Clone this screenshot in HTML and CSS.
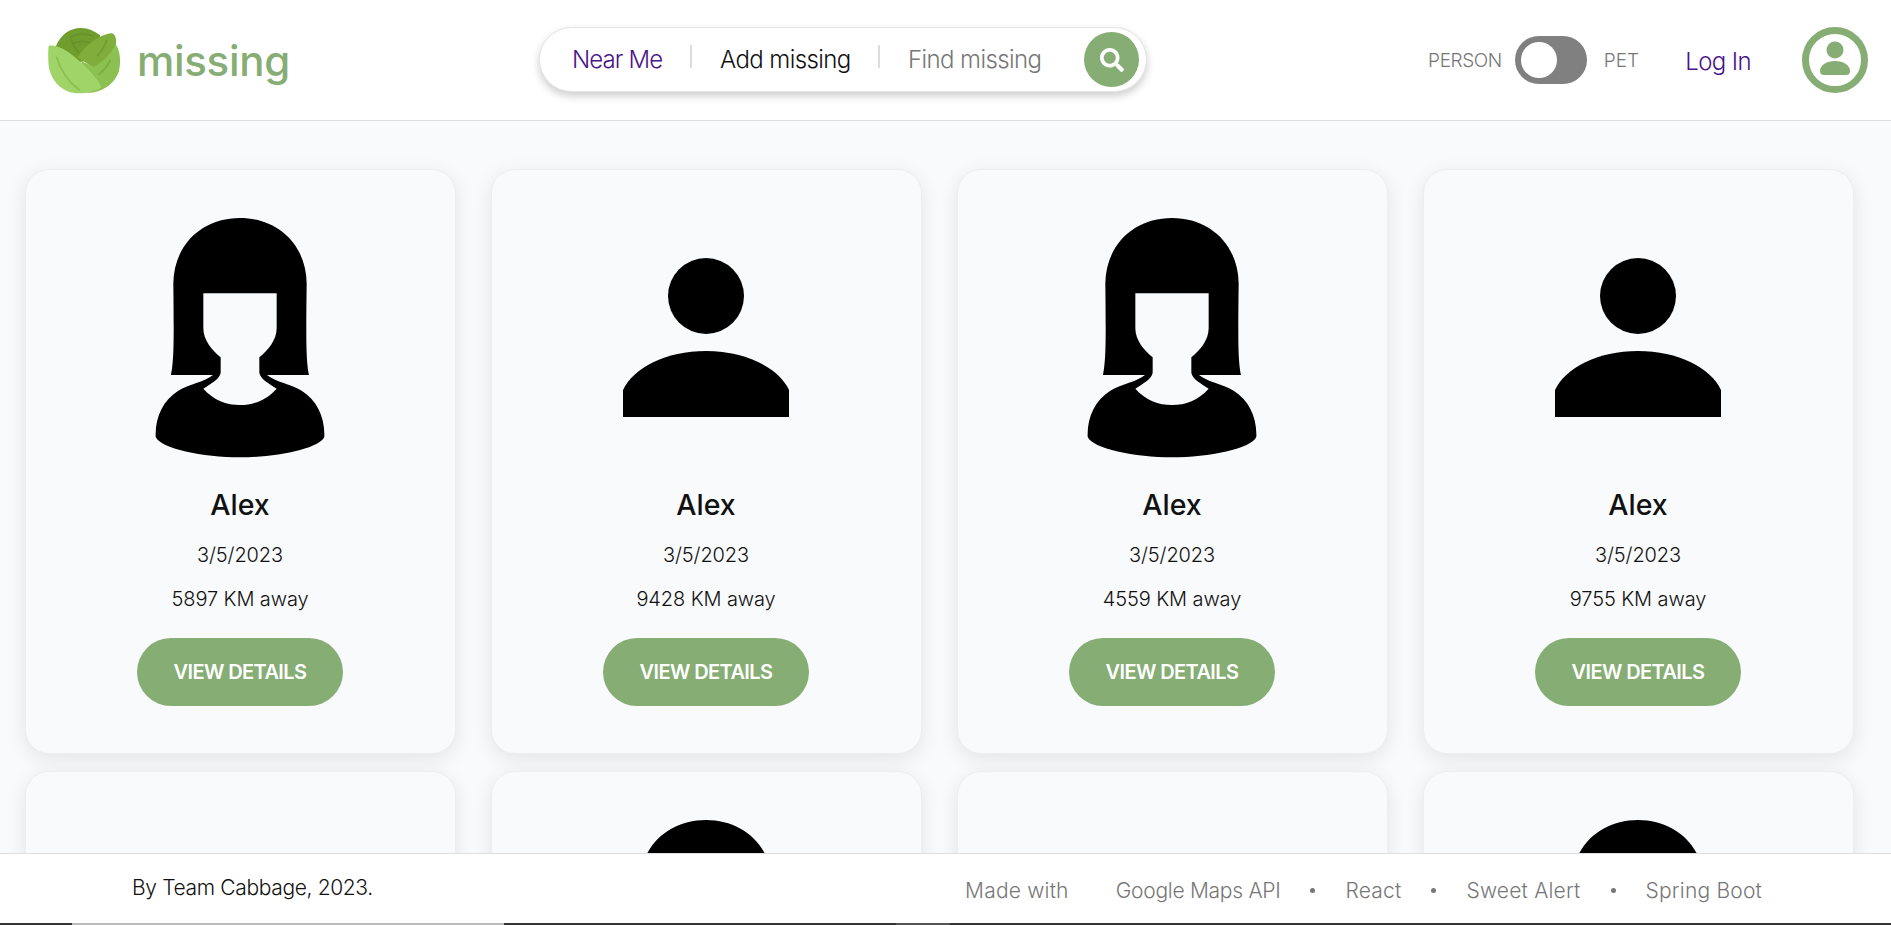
FILE: index.html
```html
<!DOCTYPE html>
<html lang="en">
<head>
    <meta charset="UTF-8">
    <meta name="viewport" content="width=device-width, initial-scale=1.0">
    <title>Missing</title>
    <link rel="stylesheet" href="styles.css">
</head>
<body>

<svg class="defs" width="0" height="0">
    <symbol id="woman" viewBox="0 54 720 720">
        <path fill-rule="evenodd" d="M153 525C162 480 162 420 160 250C162 130 250 54 360 54C470 54 558 130 560 250C558 420 558 480 567 525H441C465 545 510 552 545 572C590 600 615 650 613 710C600 745 470 772 360 772C250 772 120 745 107 710C105 650 130 600 175 572C210 552 255 545 279 525ZM250 280H470V385C470 420 445 450 418 472V518C420 535 445 550 470 566C440 600 400 615 360 615C320 615 280 600 250 566C275 550 300 535 302 518V472C275 450 250 420 250 385Z"/>
    </symbol>
    <symbol id="man" viewBox="0 0 240 240">
        <circle cx="120" cy="78" r="38"/>
        <path d="M37 199V172C47 150 80 133 120 133C160 133 193 150 203 172V199Z"/>
    </symbol>
</svg>

<header class="navbar">
    <a class="brand" href="#">
        <svg class="brand-icon" viewBox="0 0 240 216" width="80" height="72">
            <path fill="#6f9e2f" d="M35 68C50 30 80 12 110 12C135 12 150 22 168 33L175 105L100 115Z"/>
            <path fill="none" stroke="#65922a" stroke-width="5" d="M78 40C95 28 125 28 150 36M82 42C85 62 95 78 108 88M88 58C105 50 125 52 140 58"/>
            <path fill="#7fae3d" d="M100 100C125 62 170 30 203 28C216 30 218 50 215 65C200 95 172 122 150 132Z"/>
            <path fill="#8cc152" d="M215 60C228 80 232 110 225 140C215 175 180 205 130 207L112 112L150 128C175 115 200 92 215 60Z"/>
            <path fill="#a0d468" d="M14 65C40 60 80 85 105 110C140 140 165 170 172 190C155 202 130 208 105 208C55 208 20 170 14 125C12 100 12 80 14 65Z"/>
            <path fill="none" stroke="#8cc152" stroke-width="6" stroke-linecap="round" d="M38 100C50 140 75 175 105 197"/>
            <path fill="none" stroke="#7fae3d" stroke-width="6" stroke-linecap="round" d="M198 110C190 125 180 140 165 150"/>
            <path fill="none" stroke="#6f9e2f" stroke-width="5" stroke-linecap="round" d="M188 50C180 70 170 85 160 95"/>
        </svg>
        <span class="brand-name">missing</span>
    </a>

    <div class="search">
        <a class="search-near" href="#">Near Me</a>
        <span class="search-sep"></span>
        <a class="search-add" href="#">Add missing</a>
        <span class="search-sep"></span>
        <a class="search-find" href="#">Find missing</a>
        <button class="search-btn" type="button">
            <svg viewBox="0 0 512 512" width="24" height="24"><path fill="#fff" d="M505 442.7L405.3 343c-4.5-4.5-10.6-7-17-7H372c27.6-35.3 44-79.7 44-128C416 93.1 322.9 0 208 0S0 93.1 0 208s93.1 208 208 208c48.3 0 92.7-16.4 128-44v16.3c0 6.4 2.5 12.5 7 17l99.7 99.7c9.4 9.4 24.6 9.4 33.9 0l28.3-28.3c9.4-9.4 9.4-24.6.1-34zM208 336c-70.7 0-128-57.2-128-128 0-70.7 57.2-128 128-128 70.7 0 128 57.2 128 128 0 70.7-57.2 128-128 128z"/></svg>
        </button>
    </div>

    <div class="nav-right">
        <span class="toggle-label toggle-person">PERSON</span>
        <span class="toggle"><span class="toggle-knob"></span></span>
        <span class="toggle-label">PET</span>
        <a class="login" href="#">Log In</a>
        <svg class="avatar" viewBox="0 0 66 66" width="66" height="66">
            <circle cx="33" cy="33" r="29.5" fill="none" stroke="#86ad73" stroke-width="7"/>
            <circle cx="33" cy="23" r="8.5" fill="#86ad73"/>
            <path fill="#86ad73" d="M18 44C18 38 25 34 33 34C41 34 48 38 48 44C48 47 46 48 44 48H22C20 48 18 47 18 44Z"/>
        </svg>
    </div>
</header>

<main class="content">
    <div class="card-grid">
        <div class="card">
            <svg class="card-img"><use href="#woman"/></svg>
            <h2 class="card-name">Alex</h2>
            <p class="card-text">3/5/2023</p>
            <p class="card-text">5897 KM away</p>
            <a class="card-btn" href="#">VIEW DETAILS</a>
        </div>
        <div class="card">
            <svg class="card-img"><use href="#man"/></svg>
            <h2 class="card-name">Alex</h2>
            <p class="card-text">3/5/2023</p>
            <p class="card-text">9428 KM away</p>
            <a class="card-btn" href="#">VIEW DETAILS</a>
        </div>
        <div class="card">
            <svg class="card-img"><use href="#woman"/></svg>
            <h2 class="card-name">Alex</h2>
            <p class="card-text">3/5/2023</p>
            <p class="card-text">4559 KM away</p>
            <a class="card-btn" href="#">VIEW DETAILS</a>
        </div>
        <div class="card">
            <svg class="card-img"><use href="#man"/></svg>
            <h2 class="card-name">Alex</h2>
            <p class="card-text">3/5/2023</p>
            <p class="card-text">9755 KM away</p>
            <a class="card-btn" href="#">VIEW DETAILS</a>
        </div>
        <div class="card"><svg class="card-img"><use href="#man"/></svg></div>
        <div class="card"><svg class="card-img"><use href="#woman"/></svg></div>
        <div class="card"><svg class="card-img"><use href="#man"/></svg></div>
        <div class="card"><svg class="card-img"><use href="#woman"/></svg></div>
    </div>
</main>

<footer class="footer">
    <span class="footer-credit">By Team Cabbage, 2023.</span>
    <div class="footer-links">
        <span class="footer-made">Made with</span>
        <a class="footer-maps" href="#">Google Maps API</a>
        <span class="footer-dot"></span>
        <a href="#">React</a>
        <span class="footer-dot"></span>
        <a href="#">Sweet Alert</a>
        <span class="footer-dot"></span>
        <a href="#">Spring Boot</a>
    </div>
</footer>

<div class="edge-strip">
    <span class="edge-dark edge-a"></span>
    <span class="edge-light"></span>
    <span class="edge-dark edge-b"></span>
    <span class="edge-mid"></span>
    <span class="edge-dark edge-c"></span>
</div>

</body>
</html>
```

FILE: styles.css
```css
body {
    font-family: 'Inter', 'Liberation Sans', sans-serif;
    background-color: #f9fafc;
    display: flex;
    flex-direction: column;
    height: 100vh;
    margin: 0;
    overflow: hidden;
}
a {
    text-decoration: none;
}
.defs {
    display: none;
}

/* top bar */
.navbar {
    height: 120px;
    flex-shrink: 0;
    display: flex;
    align-items: center;
    padding: 0 23px 0 44px;
    background-color: white;
    border-bottom: 1px solid #dedede;
}
.brand {
    display: flex;
    align-items: center;
    gap: 13px;
    width: 495px;
}
.brand-name {
    color: #86ad73;
    font-size: 42px;
    font-weight: 500;
    line-height: 1;
    letter-spacing: -0.3px;
    margin-top: 2px;
}
.search {
    width: 608px;
    height: 65px;
    box-sizing: border-box;
    display: flex;
    align-items: center;
    padding: 0 7px 0 32px;
    margin-top: -1px;
    background-color: white;
    border: 1px solid #e4e4e4;
    border-radius: 33px;
    box-shadow: 0 4px 8px rgba(0, 0, 0, 0.2);
    font-size: 24px;
    font-weight: 300;
    letter-spacing: -0.6px;
}
.search-near {
    color: #4a148c;
    width: 118px;
    letter-spacing: -0.9px;
}
.search-add {
    color: #111;
    margin-left: 28px;
    width: 158px;
}
.search-find {
    color: #777;
    margin-left: 28px;
}
.search-sep {
    width: 2px;
    height: 23px;
    margin-top: -7px;
    background-color: #dcdcdc;
}
.search-btn {
    width: 55px;
    height: 55px;
    margin-left: auto;
    padding: 0;
    display: flex;
    align-items: center;
    justify-content: center;
    background-color: #86ad73;
    border: none;
    border-radius: 50%;
}
.nav-right {
    margin-left: auto;
    display: flex;
    align-items: center;
}
.toggle-label {
    color: #777;
    font-size: 19px;
    font-weight: 300;
}
.toggle-person {
    letter-spacing: -0.4px;
}
.toggle {
    width: 72px;
    height: 48px;
    box-sizing: border-box;
    padding: 6px;
    margin: 0 17px 0 13px;
    background-color: #808080;
    border-radius: 24px;
}
.toggle-knob {
    display: block;
    width: 36px;
    height: 36px;
    background-color: white;
    border-radius: 50%;
}
.login {
    color: #4a148c;
    font-size: 24px;
    font-weight: 300;
    letter-spacing: -0.6px;
    margin: 2px 0 0 46px;
}
.avatar {
    margin-left: 51px;
}

/* cards */
.content {
    flex: 1;
    min-height: 0;
    overflow: hidden;
    padding: 48px 0 0 24.5px;
}
.card-grid {
    display: grid;
    grid-template-columns: repeat(4, 431px);
    gap: 17px 35px;
}
.card {
    box-sizing: border-box;
    height: 585px;
    display: flex;
    flex-direction: column;
    align-items: center;
    padding-top: 48px;
    background-color: #f9fafc;
    border: 1px solid #eeeef0;
    border-radius: 24px;
    box-shadow: 0 5px 20px rgba(0, 0, 0, 0.09);
}
.card-img {
    width: 240px;
    height: 240px;
    flex-shrink: 0;
}
.card-name {
    margin: 29px 0 0;
    font-size: 28.5px;
    font-weight: 500;
    line-height: 36px;
    color: #111;
}
.card-text {
    margin: 16px 0 0;
    font-size: 20px;
    font-weight: 300;
    line-height: 28px;
    letter-spacing: -0.1px;
    color: #111;
}
.card-name + .card-text {
    margin-top: 18px;
}
.card-btn {
    margin-top: 25px;
    width: 206px;
    height: 68px;
    display: flex;
    align-items: center;
    justify-content: center;
    background-color: #86ad73;
    border-radius: 34px;
    color: white;
    font-size: 20px;
    font-weight: 600;
    letter-spacing: -0.6px;
}

/* footer */
.footer {
    height: 69px;
    flex-shrink: 0;
    display: flex;
    align-items: center;
    padding: 0 129px 0 132px;
    background-color: white;
    border-top: 1px solid #dedede;
    font-weight: 300;
}
.footer-credit {
    color: #111;
    font-size: 21px;
    letter-spacing: -0.35px;
    margin-top: -2px;
}
.footer-links {
    margin: 4px 0 0 auto;
    display: flex;
    align-items: center;
    color: #777;
    font-size: 21px;
    letter-spacing: 0.2px;
}
.footer-links a {
    color: #777;
}
.footer-links .footer-maps {
    letter-spacing: -0.27px;
}
.footer-made {
    margin-right: 47px;
}
.footer-dot {
    width: 5px;
    height: 5px;
    margin: 0 30px;
    background-color: #777;
    border-radius: 50%;
}
.edge-strip {
    height: 2px;
    flex-shrink: 0;
    display: flex;
}
.edge-dark {
    background-color: #333;
}
.edge-a {
    width: 72px;
}
.edge-light {
    width: 432px;
    background-color: #bbb;
}
.edge-b {
    width: 392px;
}
.edge-mid {
    width: 54px;
    background-color: #555;
}
.edge-c {
    flex: 1;
}
```
